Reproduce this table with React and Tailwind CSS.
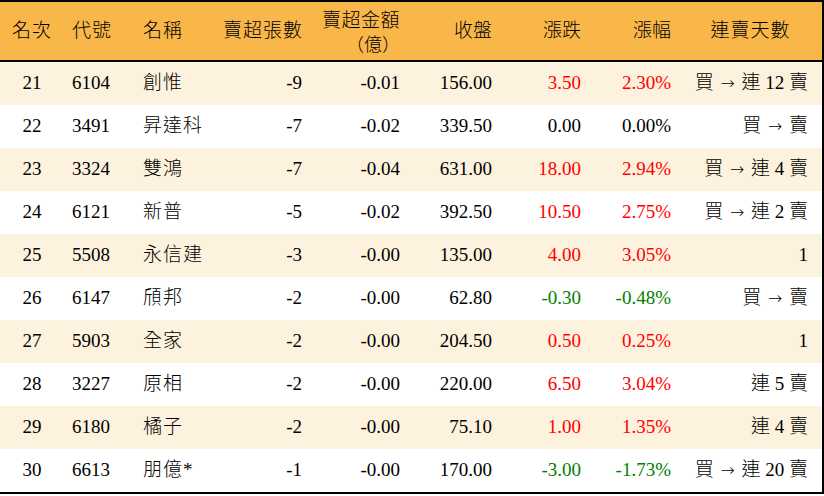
const cols = "grid grid-cols-[64px_71px_75px_100px_98px_92px_89px_90px_143px]";

const rows = [
  ["21", "6104", "創惟", "-9", "-0.01", "156.00", "3.50", "2.30%", "買 → 連 12 賣", "up"],
  ["22", "3491", "昇達科", "-7", "-0.02", "339.50", "0.00", "0.00%", "買 → 賣", "flat"],
  ["23", "3324", "雙鴻", "-7", "-0.04", "631.00", "18.00", "2.94%", "買 → 連 4 賣", "up"],
  ["24", "6121", "新普", "-5", "-0.02", "392.50", "10.50", "2.75%", "買 → 連 2 賣", "up"],
  ["25", "5508", "永信建", "-3", "-0.00", "135.00", "4.00", "3.05%", "1", "up"],
  ["26", "6147", "頎邦", "-2", "-0.00", "62.80", "-0.30", "-0.48%", "買 → 賣", "down"],
  ["27", "5903", "全家", "-2", "-0.00", "204.50", "0.50", "0.25%", "1", "up"],
  ["28", "3227", "原相", "-2", "-0.00", "220.00", "6.50", "3.04%", "連 5 賣", "up"],
  ["29", "6180", "橘子", "-2", "-0.00", "75.10", "1.00", "1.35%", "連 4 賣", "up"],
  ["30", "6613", "朋億*", "-1", "-0.00", "170.00", "-3.00", "-1.73%", "買 → 連 20 賣", "down"],
];

// streak text: swap the arrow into a font that draws a long thin one
function Streak({ text }) {
  const parts = text.split("→");
  return (
    <>
      {parts.map((p, i) => (
        <span key={i}>
          {i > 0 && <span className="font-['DejaVu_Sans',sans-serif] text-[17px] font-light px-[2px]">→</span>}
          {p}
        </span>
      ))}
    </>
  );
}

function Row({ r, shade }) {
  const tone =
    r[9] === "up" ? "text-[#ff0000]" : r[9] === "down" ? "text-[#008000]" : "text-black";
  return (
    <div className={`${cols} h-[43px] items-center ${shade ? "bg-[#fdf2dd]" : "bg-white"}`}>
      <div className="text-center">{r[0]}</div>
      <div className="pl-2">{r[1]}</div>
      <div className="pl-2 tracking-[1px]">{r[2]}</div>
      <div className="text-right pr-2">{r[3]}</div>
      <div className="text-right pr-2">{r[4]}</div>
      <div className="text-right pr-2">{r[5]}</div>
      <div className={`text-right pr-2 ${tone}`}>{r[6]}</div>
      <div className={`text-right pr-2 ${tone}`}>{r[7]}</div>
      <div className="text-right pr-[14px] whitespace-pre">
        <Streak text={r[8]} />
      </div>
    </div>
  );
}

export default function App() {
  return (
    <div className="w-[824px] h-[496px] bg-white font-['Liberation_Serif','Noto_Sans_CJK_TC',serif] font-light text-[19px] text-black">
      <div className="border-t-2 border-r-2 border-b-2 border-black">
        {/* HEADER */}
        <div className={`${cols} h-[60px] items-center bg-[#f9b74a] border-b-2 border-black`}>
          <div className="text-center tracking-[1px]">名次</div>
          <div className="pl-2 tracking-[1px]">代號</div>
          <div className="pl-2 tracking-[1px]">名稱</div>
          <div className="text-right pr-[7px] tracking-[1px]">賣超張數</div>
          <div className="text-right pr-2 leading-[23px] pt-[2px]">
            <div className="tracking-[0.5px]">賣超金額</div>
            <div className="font-['Noto_Sans_CJK_TC',sans-serif] text-[18px]">（億）</div>
          </div>
          <div className="text-right pr-2">收盤</div>
          <div className="text-right pr-2">漲跌</div>
          <div className="text-right pr-2">漲幅</div>
          <div className="text-center tracking-[1px]">連賣天數</div>
        </div>

        {/* BODY */}
        {rows.map((r, i) => (
          <Row key={r[0]} r={r} shade={i % 2 === 0} />
        ))}
      </div>
    </div>
  );
}
